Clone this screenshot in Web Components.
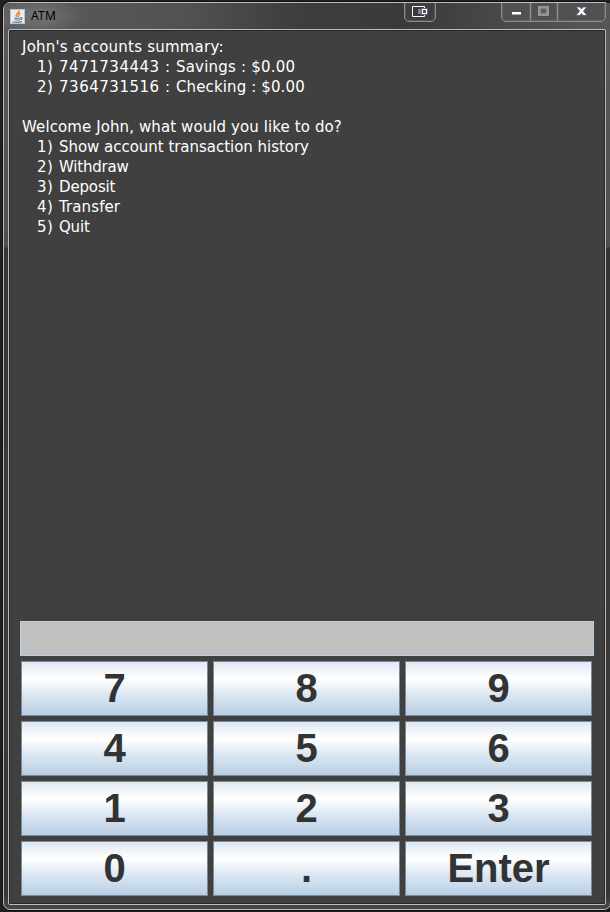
<!DOCTYPE html>
<html lang="en"><head><meta charset="utf-8"><title>ATM</title>
<style>html,body{margin:0;width:610px;height:912px;overflow:hidden;background:#202020}</style></head>
<body><atm-window></atm-window>
<script>
const define=(name,html)=>customElements.define(name,class extends HTMLElement{
  constructor(){super();this.attachShadow({mode:'open'}).innerHTML=html;}
});
define('java-icon',`<style>:host{display:block;width:15px;height:15px}svg{display:block}</style>
<svg width="15" height="15" viewBox="0 0 15 15"><rect width="15" height="15" fill="#e9eef2"/><rect x=".5" y=".5" width="14" height="14" fill="none" stroke="#b9c6d2"/>
<path d="M9 1.5C9.5 3.5 5 4.500 6.500 8M10.500 4C7.500 5 9.500 6.500 8 8" fill="none" stroke="#ed7d23" stroke-width="1.500"/>
<path d="M4 9.200H10.500M5 11H10M10.500 8.500C13 8 12.500 10.500 10.500 10.700M2.500 12.700Q7 14 12 12.600" fill="none" stroke="#54799c" stroke-width="1.100"/></svg>`);
define('tray-button',`<style>:host{display:block;width:32px;height:22px}svg{display:block}</style>
<svg width="32" height="22" viewBox="0 0 32 22"><path d="M.5 0V15.500L3.500 18.500H28.500L31.500 15.500V0" fill="none" stroke="#8c8c8c"/><path d="M1.500 0V15L4 17.500H28L30.500 15V0" fill="#3e3e3e" stroke="#565656"/>
<path d="M20.500 5.500V3.500H8.500V13.500H20.500V11.500" fill="none" stroke="#f6f6f6"/><rect x="9" y="4" width="11" height="9" fill="#393940"/><rect x="14" y="6" width="4" height="5" fill="#84848c"/><rect x="17" y="5" width="7" height="7" fill="#62627c"/><rect x="18.500" y="6.500" width="4" height="4" fill="#51516b" stroke="#fff"/></svg>`);
define('window-buttons',`<style>:host{display:block;width:105px;height:22px}svg{display:block}</style>
<svg width="105" height="22" viewBox="0 0 105 22"><path d="M.5 0V15.500L3.500 18.500H101.500L104.500 15.500V0" fill="#505050" stroke="#8c8c8c"/><path d="M1.500 0V15L4 17.500H101L103.500 15V0" fill="none" stroke="#646464"/>
<path d="M29.500 0V18M56.500 0V18" stroke="#8c8c8c"/><path d="M28.500 0V17M30.500 0V17M55.500 0V17M57.500 0V17" stroke="#5f5f5f"/>
<rect x="10.500" y="8.500" width="10" height="3.500" fill="#fff" stroke="#50505b"/>
<path d="M37 3H48V13H37Z" fill="#969696"/><rect x="40" y="6" width="5" height="4" fill="#585858" stroke="#6a6a6a"/>
<path d="M75 4H79L80.500 6L82 4H86L82.500 8L86 12.500H82L80.500 10.500L79 12.500H75L78.500 8Z" fill="#f8f8fb" stroke="#55556b" stroke-width=".8"/></svg>`);
define('title-bar',`<style>:host{display:flex;height:26px;box-sizing:border-box;padding-left:6px;background:radial-gradient(ellipse 45px 20px at 35px 13px,#858585aa,transparent),linear-gradient(90deg,#5a5a5a,#525252 180px,#3e3e3e 290px,#3a3a3a 400px,#494949 500px,#555 580px);border-top-left-radius:5px}
java-icon{margin-top:6px}span{margin:5px 0 0 6px;font:12px/16px "Noto Sans",sans-serif;color:#000;flex:1;letter-spacing:.2px}tray-button{margin-right:65px}window-buttons{margin-right:4px}</style>
<java-icon></java-icon><span>ATM</span><tray-button></tray-button><window-buttons></window-buttons>`);
define('text-line',`<style>:host{display:flex;height:20px;white-space:pre}</style><slot></slot>`);
define('menu-line',`<style>:host{display:flex;height:20px;padding-left:15px;white-space:pre}.n{width:22px;letter-spacing:.4px}</style><span class="n"><slot name="n"></slot></span><slot></slot>`);
const item=(n,t,s=0)=>`<menu-line style="letter-spacing:${s}px"><span slot="n">${n})</span>${t}</menu-line>`;
const account=(n,number,rest,s)=>item(n,`<span style="display:inline-block;width:117px;letter-spacing:.52px">${number} : </span><span style="letter-spacing:${s}px">${rest}</span>`);
define('account-display',`<style>:host{display:block;height:584px;padding:0 2px;font:15px/20px "DejaVu Sans",sans-serif;color:#fff}</style>
<text-line style="letter-spacing:.22px">John's accounts summary:</text-line>${account(1,'7471734443','Savings : $0.00',.2)}${account(2,'7364731516','Checking : $0.00',.12)}<text-line></text-line><text-line style="letter-spacing:.1px">Welcome John, what would you like to do?</text-line>${item(1,'Show account transaction history',-.03)}${item(2,'Withdraw',-.22)}${item(3,'Deposit',-.15)}${item(4,'Transfer',.1)}${item(5,'Quit',-.2)}`);
define('entry-field',`<style>:host{display:block;height:35px;box-sizing:border-box;border:1px solid #b8cfe5;background:#c0c0c0}</style>`);
define('pad-key',`<style>:host{display:flex;justify-content:center;height:55px;box-sizing:border-box;border:1px solid #7a8a99;background:linear-gradient(#dde8f3,#fff 30%,#fff 32%,#dde8f3 60%,#b8cfe5);color:#333;font:bold 40px/52px "Liberation Sans",sans-serif}</style><slot></slot>`);
define('key-pad',`<style>:host{display:grid;grid-template-columns:repeat(3,187px);gap:5px;padding:5px 1px 0}</style>${[7,8,9,4,5,6,1,2,3,0,'.','Enter'].map(k=>`<pad-key>${k}</pad-key>`).join('')}`);
define('atm-window',`<style>:host{display:block;box-sizing:border-box;width:610px;height:912px;padding:2px 0 0 3px;background:#202020;overflow:hidden}
.frame{box-sizing:border-box;width:608px;height:908px;border:1px solid #bdbdbd;border-radius:7px;background:linear-gradient(#5a5a5a,#4e4e4e 244px,#343434 245px,#3b3b3b 600px,#353535 890px,#484848);box-shadow:0 0 0 1px #111}
.body{box-sizing:border-box;margin-left:4px;width:598px;height:876px;border:1px solid #bcbcbc;border-radius:2px;background:#404040;box-shadow:inset 0 0 0 1px #282828;padding:7px 11px 0}</style>
<div class="frame"><title-bar></title-bar><div class="body"><account-display></account-display><entry-field></entry-field><key-pad></key-pad></div></div>`);
</script></body></html>
